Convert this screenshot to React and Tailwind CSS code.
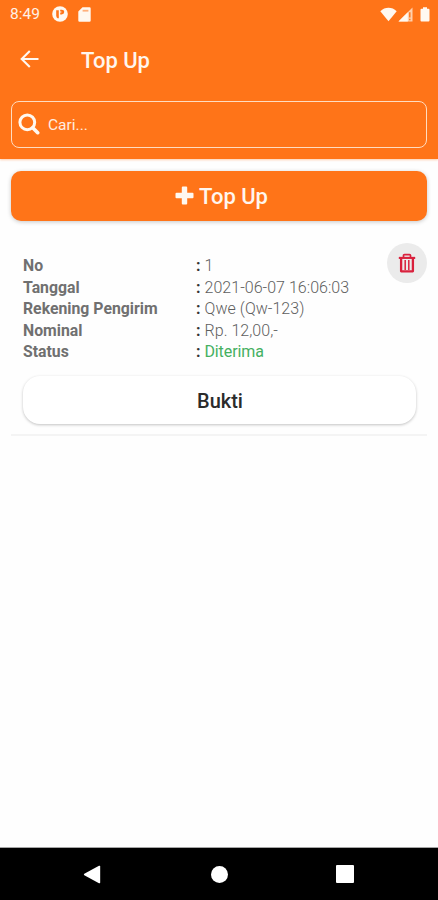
import React from "react";

const rows = [
  { label: "No", value: "1" },
  { label: "Tanggal", value: "2021-06-07 16:06:03" },
  { label: "Rekening Pengirim", value: "Qwe (Qw-123)" },
  { label: "Nominal", value: "Rp. 12,00,-" },
  { label: "Status", value: "Diterima", success: true },
];

function StatusBar() {
  return (
    <div className="flex h-[28px] items-center pl-[10px] pr-[8px]">
      <span className="w-[42px] text-[15.5px] leading-[28px] text-[#fff1e6]">8:49</span>
      <svg className="h-4 w-4" viewBox="0 0 16 16">
        <circle cx="8" cy="8" r="7.8" fill="#fff8f0" />
        <path d="M4.200 4.200h2.600v8H5.600Q4.200 11.500 4.200 9.500z" fill="#ff7418" />
        <path d="M8.200 3.800h1.400q2.600 0 2.600 2.300T9.600 8.400H8.200V6.600h1.200V5.500H8.200z" fill="#ff7418" />
      </svg>
      <svg className="ml-[10px] h-[15px] w-[13px]" viewBox="0 0 13 15">
        <path d="M4.5.3h7a1.2 1.2 0 0 1 1.2 1.2v12a1.2 1.2 0 0 1-1.2 1.2h-10A1.2 1.2 0 0 1 .3 13.500V4.600z" fill="#fff8f0" />
        <path d="M4.600 3.700h5.800" stroke="#ffb07c" strokeWidth="1.800" />
      </svg>
      <div className="flex-1" />
      <svg className="h-[15px] w-[17px]" viewBox="0 0 17 15">
        <path d="M.3 4.200C5-.3 12-.3 16.700 4.200L8.500 14.300z" fill="#fff8f0" />
      </svg>
      <svg className="ml-[1px] h-[15px] w-[15px]" viewBox="0 0 15 15">
        <path d="M.5 14.500 14.500 .5v14z" fill="#ffd0ad" />
        <path d="M.5 14.500 9.800 5.200v9.300z" fill="#fff8f0" />
        <path d="M11.800 5.300v5.200M11.800 11.700v1.500" stroke="#ff7418" strokeWidth="1.400" />
      </svg>
      <svg className="ml-[7px] h-[15px] w-[10px]" viewBox="0 0 10 15">
        <path d="M3 .3h4v1.500h1.500q1 0 1 1v10.700q0 1-1 1h-7q-1 0-1-1V2.800q0-1 1-1H3z" fill="#fff8f0" />
      </svg>
    </div>
  );
}

function Header() {
  return (
    <header className="h-[158.500px] bg-[#ff7418] shadow-[0_1px_2px_rgba(255,116,24,0.35)]">
      <StatusBar />
      <div className="flex h-[62px] items-center pl-[20px]">
        <svg className="h-[18px] w-[19px]" viewBox="0 0 19 18" fill="none" stroke="#fff8f0" strokeWidth="2.100">
          <path d="M18.500 9H2M9.800 .9 1.700 9l8.100 8.100" />
        </svg>
        <h1 className="ml-[42px] pt-[2px] text-[22px] font-medium text-[#fff6ee]">Top Up</h1>
      </div>
      <div className="mx-[11px] mt-[10.500px] flex h-[47.500px] items-center rounded-[8px] border-[1.500px] border-[#ffdcc0] pl-[6px]">
        <svg className="h-[22px] w-[22px]" viewBox="0 0 22 22" fill="none" stroke="#fff8f0">
          <circle cx="9.300" cy="9.300" r="7.400" strokeWidth="3" />
          <path d="m14.700 14.700 5 5" strokeWidth="3.600" strokeLinecap="round" />
        </svg>
        <span className="ml-[8px] pt-[2px] text-[15.500px] text-[#ffede0]">Cari...</span>
      </div>
    </header>
  );
}

function TrashButton() {
  return (
    <button className="flex h-[40px] w-[40px] items-center justify-center rounded-full bg-[#ebebeb]" aria-label="Hapus">
      <svg className="h-[20px] w-[18px]" viewBox="0 0 18 20" fill="none" stroke="#d9213d">
        <path d="M.8 4.900h16.400" strokeWidth="2.100" />
        <path d="M5.500 4.300V2.600q0-1 1-1h5q1 0 1 1v1.700" strokeWidth="1.700" />
        <path d="M3.100 5v13.300h11.800V5" strokeWidth="2.300" strokeLinejoin="round" />
        <path d="M7.200 7v10M10.800 7v10" strokeWidth="1.500" />
      </svg>
    </button>
  );
}

function TopUpItem() {
  return (
    <article className="mx-[11px] mt-[22.500px] h-[193px] border-b-2 border-[#f4f4f4] pl-[12px]">
      <div className="flex h-[133px] justify-between">
        <dl className="pt-[12px] text-[16px] leading-[21.500px]">
          {rows.map((row) => (
            <div key={row.label} className="flex h-[21.500px]">
              <dt className="w-[173px] text-[15.800px] font-bold text-[#707070]">{row.label}</dt>
              <dd className={row.success ? "font-normal tracking-[-0.100px] text-[#45b061]" : "font-light tracking-[0.030px] text-[#5e5e5e]"}>
                <span className="mr-[4px] font-bold text-[#333]">:</span>
                {row.value}
              </dd>
            </div>
          ))}
        </dl>
        <TrashButton />
      </div>
      <button className="mr-[11px] flex h-[48px] w-[393px] items-center justify-center rounded-[17px] bg-white pl-[1px] pt-[2px] text-[20px] font-medium text-[#2b2b2b] shadow-[0_1px_3px_rgba(0,0,0,0.24)]">
        Bukti
      </button>
    </article>
  );
}

function NavigationBar() {
  return (
    <nav className="flex h-[52px] items-center justify-between bg-black pl-[83px] pr-[84px] shadow-[0_-1px_0_#a5a5a5]">
      <svg className="h-[19px] w-[18px]" viewBox="0 0 18 19">
        <path d="M1.300 8.700 16 .8q1.200-.5 1.200.6v16.200q0 1.100-1.200.6L1.300 10.300q-1-.8 0-1.600z" fill="#fff" />
      </svg>
      <div className="ml-[1px] h-[17px] w-[17px] rounded-full bg-white" />
      <div className="h-[18px] w-[18px] rounded-[1px] bg-white" />
    </nav>
  );
}

export default function App() {
  return (
    <div className="flex h-[900px] w-[438px] flex-col overflow-hidden bg-[#fefefe] font-['Roboto',sans-serif]">
      <Header />
      <main className="flex-1 pt-[12px]">
        <button className="mx-[11px] flex h-[50px] w-[416px] items-center justify-center rounded-[10px] bg-[#ff7418] pl-[5px] text-[22px] font-medium text-[#fff6ee] shadow-[0_1px_4px_rgba(0,0,0,0.22)]">
          <svg className="mr-[5px] h-[19px] w-[19px]" viewBox="0 0 19 19">
            <path d="M7.800.5h3.400q1 0 1 1v5.300h5.300q1 0 1 1v3.400q0 1-1 1h-5.300v5.300q0 1-1 1H7.800q-1 0-1-1v-5.300H1.500q-1 0-1-1V7.800q0-1 1-1h5.300V1.500q0-1 1-1z" fill="#fff8f0" />
          </svg>
          <span className="pt-[1px]">Top Up</span>
        </button>
        <TopUpItem />
      </main>
      <NavigationBar />
    </div>
  );
}
